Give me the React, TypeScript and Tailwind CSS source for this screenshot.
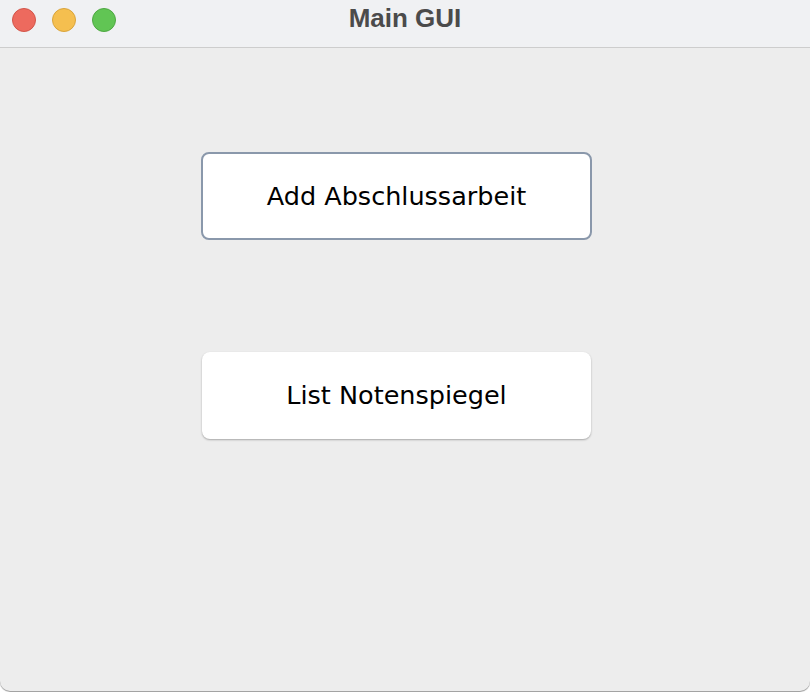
export default function App() {
  return (
    <div className="w-[810px] h-[692px] bg-white">
      <div className="w-[810px] h-[691px] bg-[#ededed] rounded-b-[10px] shadow-[0_1px_1px_#9a9a9a] flex flex-col overflow-hidden">
        <div className="h-[48px] bg-[#f0f1f3] border-b border-[#cdcdcd] relative flex items-center justify-center shrink-0">
          <div className="absolute left-[12px] top-[8px] flex gap-[16px]">
            <div className="w-[24px] h-[24px] rounded-full bg-[#ed6a5e] border border-[#d25549]" />
            <div className="w-[24px] h-[24px] rounded-full bg-[#f5bf4f] border border-[#d9a43b]" />
            <div className="w-[24px] h-[24px] rounded-full bg-[#61c554] border border-[#4ea842]" />
          </div>
          <div className="text-[26px] font-bold text-[#4b4b4b] -mt-[10px]" style={{ fontFamily: '"Liberation Sans", Arial, sans-serif' }}>
            Main GUI
          </div>
        </div>
        <div className="flex-1 flex flex-col items-start pt-[104px] pl-[201px]" style={{ fontFamily: '"DejaVu Sans", sans-serif' }}>
          <button className="w-[391px] h-[88px] bg-white rounded-[8px] border-[2.5px] border-[#8a98ab] text-[25.5px] text-black">
            Add Abschlussarbeit
          </button>
          <button className="mt-[112px] ml-[1px] w-[389px] h-[87px] bg-white rounded-[8px] shadow-[0_1px_2px_rgba(0,0,0,0.3)] text-[25.5px] text-black">
            List Notenspiegel
          </button>
        </div>
      </div>
    </div>
  );
}
